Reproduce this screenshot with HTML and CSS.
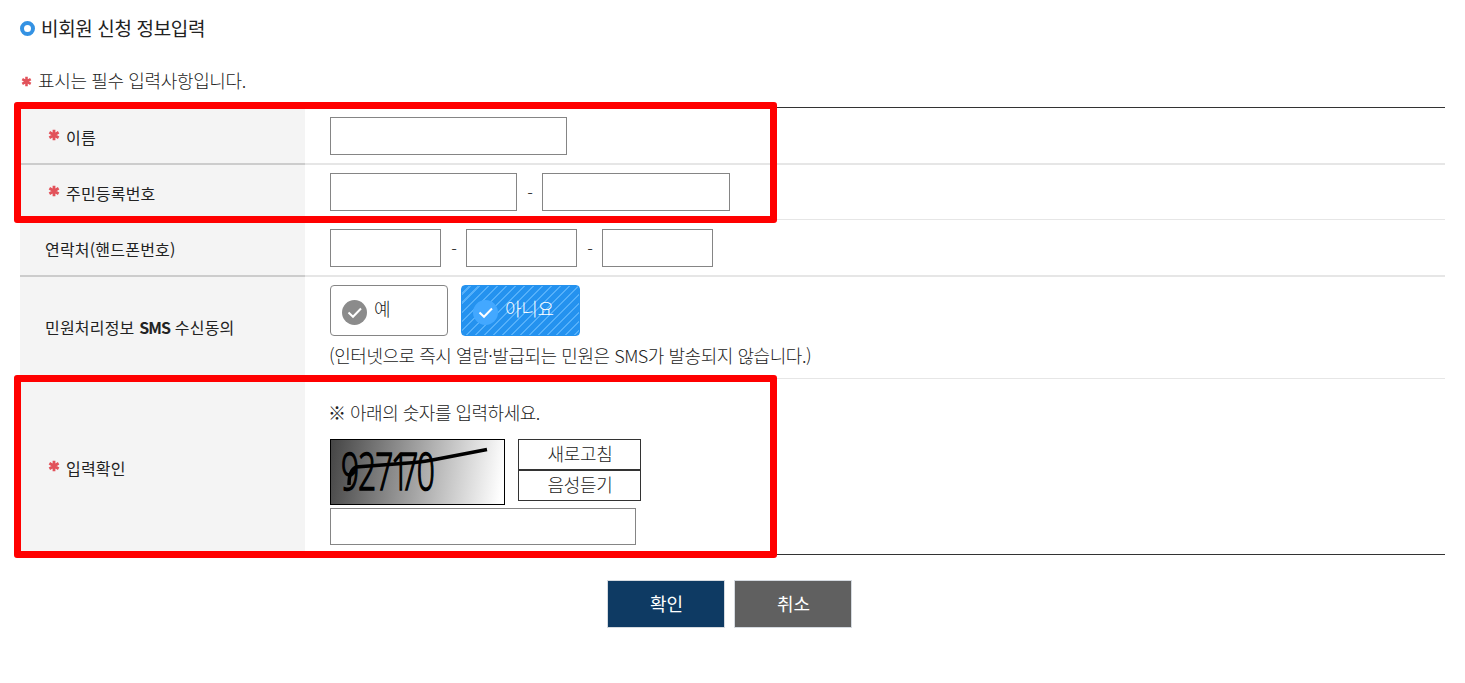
FILE: index.html
```
<!DOCTYPE html>
<html lang="ko">
<head>
    <meta charset="UTF-8">
    <meta name="viewport" content="width=device-width, initial-scale=1.0">
    <title>비회원 신청 정보입력</title>
    <link rel="stylesheet" href="styles.css">
</head>
<body>
    <svg class="defs" width="0" height="0">
        <symbol id="star" viewBox="0 0 12 12">
            <path d="M6 .7v10.6M1.4 3.3l9.2 5.4M1.4 8.7l9.2-5.4" stroke="#e2525a" stroke-width="2.8" fill="none"/>
        </symbol>
    </svg>

    <h1 class="title"><span class="ring"></span><span>비회원 신청 정보입력</span></h1>
    <p class="notice"><svg class="star"><use href="#star"/></svg><span>표시는 필수 입력사항입니다.</span></p>

    <form class="form">
        <!-- Name -->
        <div class="row row-name">
            <label class="head required"><svg class="star"><use href="#star"/></svg>이름</label>
            <div class="cell"><input type="text" class="input name"></div>
        </div>

        <!-- Resident number -->
        <div class="row row-number">
            <label class="head required"><svg class="star"><use href="#star"/></svg>주민등록번호</label>
            <div class="cell">
                <input type="text" class="input number-front">
                <span class="dash">-</span>
                <input type="text" class="input number-back">
            </div>
        </div>

        <!-- Phone -->
        <div class="row row-phone">
            <label class="head">연락처(핸드폰번호)</label>
            <div class="cell">
                <input type="text" class="input phone">
                <span class="dash">-</span>
                <input type="text" class="input phone">
                <span class="dash">-</span>
                <input type="text" class="input phone">
            </div>
        </div>

        <!-- SMS -->
        <div class="row row-sms">
            <label class="head"><span>민원처리정보 <span class="latin">SMS</span> 수신동의</span></label>
            <div class="cell column">
                <div class="choices">
                    <button type="button" class="choice">
                        <svg class="check" viewBox="0 0 25 25">
                            <circle cx="12.5" cy="12.5" r="12.5" fill="#8b8b8b"/>
                            <path d="M6.5 12.5l4.5 4.3 8-8.3" stroke="#fff" stroke-width="2" fill="none"/>
                        </svg>
                        <span>예</span>
                    </button>
                    <button type="button" class="choice selected">
                        <svg class="check" viewBox="0 0 25 25">
                            <circle cx="12.5" cy="12.5" r="12.5" fill="#43a8ff"/>
                            <path d="M6.5 12.5l4.5 4.3 8-8.3" stroke="#fff" stroke-width="2" fill="none"/>
                        </svg>
                        <span>아니요</span>
                    </button>
                </div>
                <p class="sms-note">(인터넷으로 즉시 열람·발급되는 민원은 SMS가 발송되지 않습니다.)</p>
            </div>
        </div>

        <!-- Captcha -->
        <div class="row row-captcha">
            <label class="head required"><svg class="star"><use href="#star"/></svg>입력확인</label>
            <div class="cell column">
                <p class="captcha-note">※ 아래의 숫자를 입력하세요.</p>
                <div class="captcha">
                    <svg class="captcha-image" width="175" height="66">
                        <defs>
                            <linearGradient id="shade" gradientUnits="userSpaceOnUse" x1="0" y1="20" x2="172" y2="46">
                                <stop offset="0" stop-color="#474747"/>
                                <stop offset="1" stop-color="#fff"/>
                            </linearGradient>
                        </defs>
                        <rect x="0.5" y="0.5" width="174" height="65" fill="url(#shade)" stroke="#000"/>
                        <text class="digits" transform="translate(11 50.5) scale(0.61 1)" x="0 28 56 82 97 124">927170</text>
                        <path d="M19 46c0-9 2-16 7-18l59-4.500c7-.6 13-1.500 20-3l52-10" stroke="#000" stroke-width="3.5" fill="none"/>
                    </svg>
                    <div class="captcha-buttons">
                        <button type="button">새로고침</button>
                        <button type="button">음성듣기</button>
                    </div>
                </div>
                <input type="text" class="input answer">
            </div>
        </div>

        <div class="highlight highlight-top"></div>
        <div class="highlight highlight-bottom"></div>
    </form>

    <div class="actions">
        <button type="button" class="confirm">확인</button>
        <button type="button" class="cancel">취소</button>
    </div>
</body>
</html>
```

FILE: styles.css
```
* {
    box-sizing: border-box;
}

body {
    margin: 0;
    padding: 0 20px;
    background: #fff;
    color: #222;
    font-family: "Noto Sans CJK KR", sans-serif;
    font-size: 17px;
    font-weight: 300;
}

p, h1 {
    margin: 0;
}

button {
    padding: 0;
    font: inherit;
    color: inherit;
}

.defs {
    display: block;
}

.title {
    display: flex;
    align-items: center;
    gap: 6px;
    height: 57px;
    padding-bottom: 2px;
    font-size: 19px;
    font-weight: 400;
    letter-spacing: -0.35px;
}

.ring {
    width: 15px;
    height: 15px;
    margin-top: 2px;
    border: 4px solid #3492e3;
    border-radius: 50%;
}

.notice {
    display: flex;
    align-items: center;
    gap: 6px;
    height: 50px;
    padding-bottom: 5px;
    font-size: 18px;
    letter-spacing: -0.36px;
}

.star {
    width: 12px;
    height: 12px;
}

.notice .star {
    width: 11px;
    height: 11px;
    margin: 4px 0 0 1px;
}

.form {
    position: relative;
    border-top: 1px solid #333;
}

.row {
    display: flex;
}

.head {
    display: flex;
    align-items: center;
    width: 285px;
    padding: 3px 0 0 25px;
    background: #f4f4f4;
    border-bottom: 1px solid #e6e6e6;
    font-size: 16px;
    font-weight: 400;
    letter-spacing: 0.2px;
}

.latin {
    font-weight: 700;
    letter-spacing: -0.9px;
}

.required {
    padding-left: 28px;
}

.head .star {
    margin: 0 6px 4px 0;
}

.cell {
    display: flex;
    flex: 1;
    align-items: flex-start;
    padding: 9px 0 0 25px;
    border-bottom: 1px solid #e6e6e6;
}

.column {
    flex-direction: column;
}

.row-name {
    height: 57px;
}

.row-number {
    height: 55px;
}

.row-phone {
    height: 57px;
}

.row-name .head, .row-phone .head {
    border-bottom: 2px solid #ccc;
}

.row-name .cell, .row-phone .cell {
    border-bottom-width: 2px;
}

.row-number .head {
    padding-top: 1px;
}

.row-number .cell {
    padding-top: 8px;
}

.row-sms {
    height: 102px;
}

.row-sms .head {
    padding: 0 0 2px 25px;
}

.row-sms .cell {
    padding-top: 8px;
}

.row-captcha {
    height: 176px;
}

.row-captcha .head, .row-captcha .cell {
    border-bottom-color: #333;
}

.input {
    height: 38px;
    border: 1px solid #858585;
    background: #fff;
}

.name {
    width: 237px;
}

.number-front {
    width: 187px;
}

.number-back {
    width: 188px;
}

.phone {
    width: 111px;
}

.dash {
    width: 25px;
    padding-left: 1px;
    line-height: 40px;
    text-align: center;
}

.choices {
    display: flex;
    gap: 13px;
}

.choice {
    display: flex;
    align-items: flex-start;
    gap: 7px;
    width: 118px;
    height: 51px;
    padding: 0 0 0 11px;
    border: 1px solid #858585;
    border-radius: 4px;
    background: #fff;
    font-size: 18px;
    line-height: 45px;
    letter-spacing: -0.3px;
}

.selected {
    width: 119px;
    border-color: #2492ef;
    background: repeating-linear-gradient(135deg, #2492ef 0 4.9px, #55b0fa 4.9px 6.4px);
    color: #fff;
}

.check {
    width: 25px;
    height: 25px;
    margin-top: 14px;
}

.sms-note {
    margin: 6px 0 0 -1px;
    font-size: 18px;
    line-height: 27px;
    letter-spacing: -0.46px;
    white-space: nowrap;
}

.captcha-note {
    margin: 11px 0 0 -2px;
    font-size: 18px;
    line-height: 27px;
    letter-spacing: -0.5px;
}

.captcha {
    display: flex;
    gap: 13px;
    margin: 13px 0 3px;
}

.captcha-image {
    overflow: visible;
}

.digits {
    font-family: "Open Sans", sans-serif;
    font-size: 52px;
    font-weight: 300;
    stroke: #000;
    stroke-width: 1.3px;
    vector-effect: non-scaling-stroke;
}

.captcha-buttons {
    display: flex;
    flex-direction: column;
}

.captcha-buttons button {
    width: 123px;
    height: 31px;
    border: 1px solid #333;
    background: #fff;
    font-size: 18px;
    line-height: 25px;
    padding: 0 0 2px 1px;
    letter-spacing: -0.3px;
}

.answer {
    width: 306px;
    height: 37px;
}

/* red frames over the required rows */
.highlight {
    position: absolute;
    left: -6px;
    width: 763px;
    border: 7px solid #f00;
    border-radius: 3px;
    pointer-events: none;
}

.highlight-top {
    top: -6px;
    height: 121px;
}

.highlight-bottom {
    top: 267px;
    height: 183px;
}

.actions {
    display: flex;
    justify-content: center;
    gap: 9px;
    padding-top: 25px;
    margin-right: 7px;
}

.actions button {
    width: 118px;
    height: 48px;
    padding: 0 0 2px 2px;
    border: 1px solid #d5dae0;
    color: #fff;
    font-size: 18px;
    font-weight: 400;
}

.actions .confirm {
    background: #0e3a63;
}

.actions .cancel {
    background: #606060;
}
```
